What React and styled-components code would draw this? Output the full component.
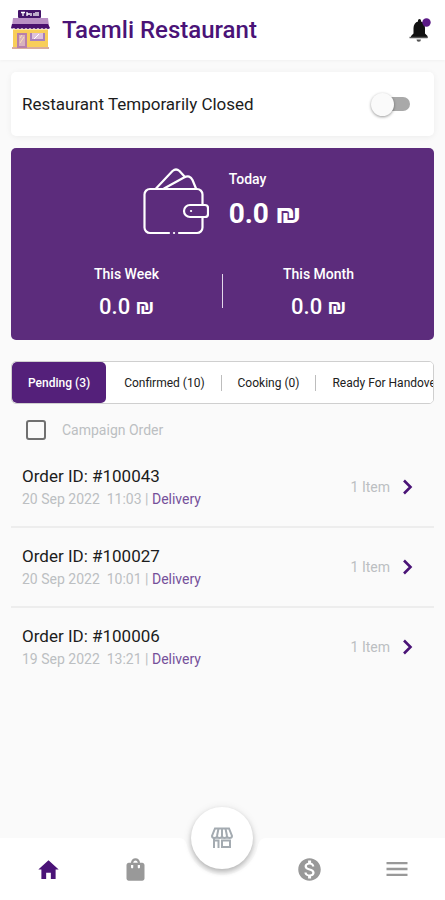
import React, { useState } from "react";
import styled, { createGlobalStyle } from "styled-components";
import { MdMenu, MdMonetizationOn, MdShoppingBag } from "react-icons/md";
import { IoMdHome } from "react-icons/io";

const purple = "#5c2c7c";
const deep = "#4a1377";

const GlobalStyle = createGlobalStyle`
  *, *::before, *::after { box-sizing: border-box; }
  body {
    margin: 0;
    background: #fafafa;
    color: #1c1c1c;
    font-family: Roboto, "Noto Sans", sans-serif;
    font-size: 14px;
  }
  button { font: inherit; color: inherit; border: 0; padding: 0; background: none; cursor: pointer; }
  h1, h2, p, ul { margin: 0; padding: 0; }
`;

const Screen = styled.div`
  min-height: 100vh;
  display: flex;
  flex-direction: column;
`;

const Header = styled.header`
  display: flex;
  align-items: center;
  gap: 12px;
  height: 60px;
  padding: 0 12px 0 11px;
  background: #fff;
  box-shadow: 0 1px 3px rgba(0, 0, 0, 0.04);
`;

const Title = styled.h1`
  flex: 1;
  color: ${deep};
  font-size: 24px;
  line-height: 28px;
  font-weight: 500;
`;

const IconButton = styled.button`
  display: flex;
`;

const Main = styled.main`
  flex: 1;
  display: flex;
  flex-direction: column;
  padding: 12px 11px 0;
`;

const StatusCard = styled.label`
  display: flex;
  align-items: center;
  justify-content: space-between;
  height: 64px;
  padding: 0 24px 0 11px;
  border-radius: 5px;
  background: #fff;
  box-shadow: 0 1px 6px rgba(0, 0, 0, 0.06);
  font-size: 17px;
`;

const Switch = styled.input`
  appearance: none;
  display: flex;
  align-items: center;
  width: 34px;
  height: 14px;
  margin: 0;
  border-radius: 7px;
  background: #a9a9a9;
  cursor: pointer;

  &::before {
    content: "";
    flex: none;
    width: 23px;
    height: 23px;
    margin-left: -5px;
    border-radius: 50%;
    background: #fafafa;
    box-shadow: 0 1px 3px rgba(0, 0, 0, 0.4);
  }
  &:checked { background: #b79bc9; }
  &:checked::before { margin-left: 16px; background: ${deep}; }
`;

const Earnings = styled.section`
  display: flex;
  flex-direction: column;
  gap: 27px;
  margin-top: 12px;
  padding: 20px 0 21px;
  border-radius: 5px;
  background: ${purple};
  color: #fff;
`;

const TodayRow = styled.div`
  display: flex;
  justify-content: center;
  gap: 20px;
  padding-right: 2px;
`;

const Periods = styled.div`
  display: grid;
  grid-template-columns: 1fr 1px 1fr;
  align-items: center;
`;

const Divider = styled.span`
  width: 1px;
  height: 34px;
  background: #e3d8ea;
`;

const Stat = styled.div`
  display: flex;
  flex-direction: column;
  align-items: ${(p) => (p.$large ? "flex-start" : "center")};
  gap: ${(p) => (p.$large ? "12px" : "10px")};
  padding-left: ${(p) => (p.$inset ? "20px" : "0")};
  padding-right: ${(p) => (p.$trail ? "20px" : "0")};
`;

const StatLabel = styled.p`
  font-size: 14px;
  line-height: 22px;
  font-weight: 500;
`;

const Amount = styled.p`
  font-size: ${(p) => (p.$large ? "28px" : "22px")};
  line-height: 24px;
  font-weight: ${(p) => (p.$large ? 700 : 500)};
`;

const Tabs = styled.div`
  display: flex;
  height: 43px;
  margin-top: 21px;
  border: 1px solid #cfcfcf;
  border-radius: 5px;
  background: #fff;
  overflow: hidden;
`;

const Tab = styled.button`
  flex: none;
  display: flex;
  align-items: center;
  padding: 0 16px;
  border-radius: 5px;
  background: ${(p) => (p.$active ? "#54207a" : "#fff")};
  color: ${(p) => (p.$active ? "#fff" : "#202020")};
  font-size: 12px;
  font-weight: ${(p) => (p.$active ? 500 : 400)};
  white-space: nowrap;

  & + & { padding-left: 18px; }
`;

const TabDivider = styled.span`
  flex: none;
  align-self: center;
  width: 1px;
  height: 16px;
  background: #bdbdbd;
`;

const CampaignFilter = styled.label`
  display: flex;
  align-items: center;
  gap: 16px;
  height: 44px;
  padding: 8px 0 0 15px;
  color: #bcbfc2;
`;

const CheckBox = styled.input`
  appearance: none;
  width: 20px;
  height: 20px;
  margin: 0;
  border: 2px solid #707070;
  border-radius: 3px;
  &:checked { background: ${deep}; border-color: ${deep}; }
`;

const Orders = styled.ul`
  list-style: none;
`;

const Order = styled.li`
  & + & { border-top: 2px solid #ededed; }
`;

const OrderButton = styled.button`
  display: flex;
  align-items: center;
  gap: 12px;
  width: 100%;
  height: 78px;
  padding: 0 21px 0 11px;
  text-align: left;
`;

const OrderInfo = styled.div`
  flex: 1;
`;

const OrderId = styled.h2`
  color: #1c1c1c;
  font-size: 17px;
  line-height: 24px;
  font-weight: 400;
`;

const Muted = styled.p`
  color: #bcbfc2;
  line-height: 22px;
  white-space: pre;
`;

const Kind = styled.span`
  color: #75509a;
`;

const Nav = styled.nav`
  position: sticky;
  bottom: 0;
  display: flex;
  height: 62px;
`;

const NavSide = styled.div`
  flex: 1;
  display: grid;
  grid-template-columns: 1fr 1fr;
  padding: ${(p) => (p.$end ? "0 5px 0 0" : "0 0 0 5px")};
  background: #fff;
`;

const NavSlot = styled.button`
  display: flex;
  align-items: center;
  justify-content: center;
  color: ${(p) => (p.$active ? deep : "#999")};
`;

const Dock = styled.div`
  position: relative;
  display: flex;
  width: 87px;
`;

const StoreButton = styled.button`
  position: absolute;
  left: 12px;
  top: -31px;
  display: flex;
  align-items: center;
  justify-content: center;
  width: 62px;
  height: 62px;
  border-radius: 50%;
  background: #fff;
  box-shadow: 0 3px 5px rgba(0, 0, 0, 0.22), 0 1px 8px rgba(0, 0, 0, 0.1);
`;

const StoreLogo = () => (
  <svg width="39" height="42" viewBox="0 0 39 42" aria-hidden="true">
    <rect x="7" y="1" width="23" height="8" rx="1" fill="#431369" />
    <path d="M10 3.500h4M12 3.500v3.500M16 3v4M16 5h3M20 4v3M23 4v3M25 3v4M27 3v4" stroke="#fff" strokeWidth="1.300" />
    <path d="M2 9h35l1 8H1z" fill="#b98fc4" />
    <path d="M1 15h36l2 4q-2 2-4 0-2 2-4 0-2 2-4 0-2 2-4 0-2 2-4 0-2 2-4 0-2 2-4 0-2 2-4 0-2 2-4 0-2 1-3 0z" fill="#4b116f" />
    <path d="M2 20.500h35V38H2z" fill="#f8ce59" />
    <path d="M1 38h37v2H1z" fill="#d9ac9c" />
    <path d="M6 24h10v15H6z" fill="#b880a9" />
    <path d="M8 26h6v11H8z" fill="#d9b2bd" />
    <path d="M9 34l4-6M9 29l2-3" stroke="#fae2b7" />
    <path d="M19 24h15v8H19z" fill="#a880bb" />
    <path d="M21 24h11v6H21z" fill="#dec2db" />
    <path d="M23 30l5-5" stroke="#fff" />
  </svg>
);

const Bell = () => (
  <svg width="26" height="26" viewBox="0 0 26 26" aria-hidden="true">
    <path d="M4 21v-2l2.500-2.500V11c0-3.300 2-5.800 4.500-6.500V3.500a1.500 1.500 0 0 1 3 0v1c2.700.7 4 3.200 4 6.500v5.500l2.500 2.500v2z" fill="#111" />
    <path d="M2.500 20.500h18" stroke="#555" strokeWidth="1.500" />
    <path d="M9.500 22.500h4.500a2.200 2.200 0 0 1-4.500 0z" fill="#555" />
    <circle cx="19.500" cy="5.500" r="4.200" fill="#5b1a86" />
  </svg>
);

const Wallet = () => (
  <svg width="66" height="68" viewBox="0 0 66 68" fill="none" stroke="#fff" strokeWidth="2.200" strokeLinecap="round" strokeLinejoin="round" aria-hidden="true">
    <path d="M26 65H7a5.500 5.500 0 0 1-5.500-5.500v-33A5.500 5.500 0 0 1 7 21h47a5.500 5.500 0 0 1 5.500 5.500V37M59.500 49v10.500A5.500 5.500 0 0 1 54 65H36" />
    <path d="M31 65h.1" />
    <path d="M47 37h15q3 0 3 3v6q0 3-3 3H47a6 6 0 0 1 0-12z" />
    <path d="M48 43h.1" />
    <path d="M13 20.500 29.500 3q3.500-3 7 0l5 5.500" />
    <path d="M21 20.500 41 9.500q6-3 8.500 2.500l3.500 8.500" />
  </svg>
);

const Chevron = () => (
  <svg width="11" height="16" viewBox="0 0 11 16" aria-hidden="true">
    <path d="M2 1.500 8.500 8 2 14.500" fill="none" stroke={deep} strokeWidth="2.600" />
  </svg>
);

const StoreIcon = () => (
  <svg width="24" height="22" viewBox="0 0 24 22" fill="none" stroke="#a4abb1" strokeWidth="2" aria-hidden="true">
    <path d="M5 1.500h14l3 7.500q0 2-2.500 2T17 9q0 2-2.500 2T12 9q0 2-2.500 2T7 9q0 2-2.500 2T2 9z" />
    <path d="M8.500 1.500 7 9M12 1.500V9M15.500 1.500 17 9" />
    <path d="M4 10.500V21M8.500 21v-7.500H4M12 13.500h8V20h-8z" />
  </svg>
);

const Notch = () => (
  <svg width="87" height="62" viewBox="0 0 87 62" aria-hidden="true">
    <path d="M0 0q6 0 8 7a36 36 0 0 0 71 0q2-7 8-7v62H0z" fill="#fff" />
  </svg>
);

const tabs = ["Pending (3)", "Confirmed (10)", "Cooking (0)", "Ready For Handover (0)"];

const orders = [
  { id: "100043", date: "20 Sep 2022  11:03" },
  { id: "100027", date: "20 Sep 2022  10:01" },
  { id: "100006", date: "19 Sep 2022  13:21" },
];

export default function App() {
  const [active, setActive] = useState(0);

  return (
    <Screen>
      <GlobalStyle />
      <Header>
        <StoreLogo />
        <Title>Taemli Restaurant</Title>
        <IconButton aria-label="Notifications"><Bell /></IconButton>
      </Header>
      <Main>
        <StatusCard>
          Restaurant Temporarily Closed
          <Switch type="checkbox" role="switch" />
        </StatusCard>
        <Earnings>
          <TodayRow>
            <Wallet />
            <Stat $large>
              <StatLabel>Today</StatLabel>
              <Amount $large>0.0 ₪</Amount>
            </Stat>
          </TodayRow>
          <Periods>
            <Stat $inset>
              <StatLabel>This Week</StatLabel>
              <Amount>0.0 ₪</Amount>
            </Stat>
            <Divider />
            <Stat $trail>
              <StatLabel>This Month</StatLabel>
              <Amount>0.0 ₪</Amount>
            </Stat>
          </Periods>
        </Earnings>
        <Tabs>
          {tabs.map((label, i) => (
            <React.Fragment key={label}>
              {i > 1 && <TabDivider />}
              <Tab $active={i === active} onClick={() => setActive(i)}>{label}</Tab>
            </React.Fragment>
          ))}
        </Tabs>
        <CampaignFilter>
          <CheckBox type="checkbox" />
          Campaign Order
        </CampaignFilter>
        <Orders>
          {orders.map((order) => (
            <Order key={order.id}>
              <OrderButton>
                <OrderInfo>
                  <OrderId>Order ID: #{order.id}</OrderId>
                  <Muted>{order.date} | <Kind>Delivery</Kind></Muted>
                </OrderInfo>
                <Muted>1 Item</Muted>
                <Chevron />
              </OrderButton>
            </Order>
          ))}
        </Orders>
      </Main>
      <Nav>
        <NavSide>
          <NavSlot $active aria-label="Home"><IoMdHome size={25} /></NavSlot>
          <NavSlot aria-label="Orders"><MdShoppingBag size={27} /></NavSlot>
        </NavSide>
        <Dock>
          <Notch />
          <StoreButton aria-label="Store"><StoreIcon /></StoreButton>
        </Dock>
        <NavSide $end>
          <NavSlot aria-label="Wallet"><MdMonetizationOn size={27} /></NavSlot>
          <NavSlot aria-label="Menu"><MdMenu size={28} /></NavSlot>
        </NavSide>
      </Nav>
    </Screen>
  );
}
